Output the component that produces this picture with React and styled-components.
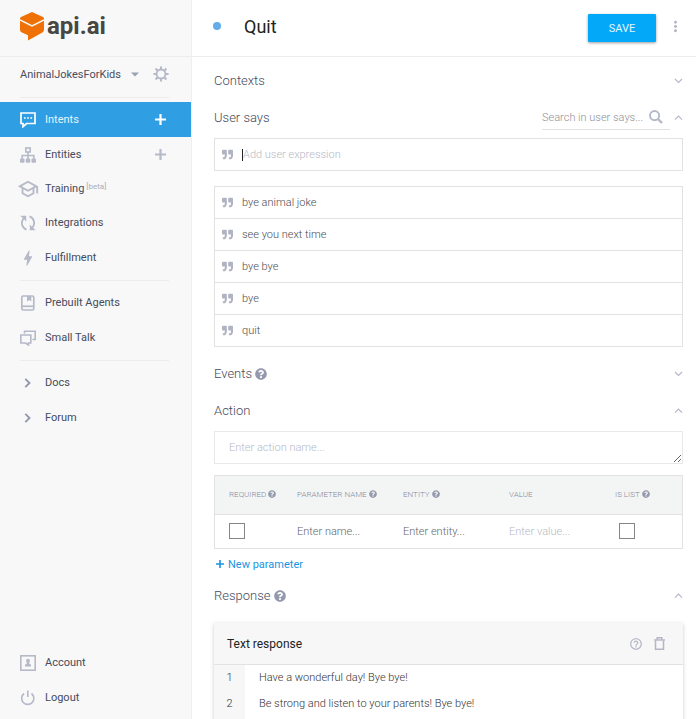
import styled, { createGlobalStyle } from "styled-components";
import { FaQuestionCircle, FaQuoteRight } from "react-icons/fa";
import { MdHelpOutline, MdOutlineSchool, MdBolt, MdMoreVert } from "react-icons/md";

const expressions = ["bye animal joke", "see you next time", "bye bye", "bye", "quit"];

const responses = [
  "Have a wonderful day! Bye bye!",
  "Be strong and listen to your parents! Bye bye!",
];

const LogoMark = () => (
  <svg width="24" height="29" viewBox="0 0 24 29" aria-hidden="true">
    <path
      fill="#ef7106"
      d="M12 0 L23 5 Q24 5.500 24 7 V17.500 Q24 19.500 22.400 20.400 L8 28.500 V23.300 L1.400 20.200 Q0 19.400 0 17.800 V7 Q0 5.500 1 5 Z"
    />
    <path d="M0 8 L12 14 L24 8" fill="none" stroke="#f8f8f8" strokeWidth="1.500" />
  </svg>
);

const GearIcon = () => (
  <svg width="16" height="16" viewBox="0 0 16 16" fill="none" stroke="#b5b9c8" aria-hidden="true">
    <circle cx="8" cy="8" r="4.500" strokeWidth="1.900" />
    <path
      strokeWidth="2.100"
      d="M8 .400V3M8 13v2.600M.400 8H3M13 8h2.600M2.600 2.600l1.900 1.900M11.500 11.500l1.900 1.900M13.400 2.600l-1.900 1.900M4.500 11.500l-1.900 1.900"
    />
  </svg>
);

const IntentsIcon = () => (
  <svg width="16" height="16" viewBox="0 0 16 16" fill="none" stroke="#fff" strokeWidth="1.700" aria-hidden="true">
    <path d="M1 1h14v10.500H6.500L3 14.700V11.500H1Z" />
    <path d="M4 6h1.700M7.200 6h1.700M10.400 6h1.700" strokeWidth="1.700" />
  </svg>
);

const EntitiesIcon = () => (
  <svg width="16" height="16" viewBox="0 0 16 16" fill="none" stroke="#b5b9c8" strokeWidth="1.600" aria-hidden="true">
    <rect x="5.800" y="1" width="4.400" height="4" />
    <path d="M8 5v7M2.200 12V8.500h11.600V12" />
    <g fill="#b5b9c8" stroke="none">
      <rect x="0" y="11.500" width="4.500" height="4.200" rx="1" />
      <rect x="5.750" y="11.500" width="4.500" height="4.200" rx="1" />
      <rect x="11.500" y="11.500" width="4.500" height="4.200" rx="1" />
    </g>
  </svg>
);

const IntegrationsIcon = () => (
  <svg width="16" height="16" viewBox="0 0 16 16" fill="none" stroke="#b5b9c8" strokeWidth="1.800" aria-hidden="true">
    <path d="M6.500 14.700C2.500 13.500 -.200 7.500 4 3.200" />
    <path d="M9.500 1.300C13.500 2.500 16.200 8.500 12 12.800" />
    <path d="M.300 .800H6.200V6.500L4.300 4.500Z" fill="#b5b9c8" stroke="none" />
    <path d="M15.700 15.200H9.800V9.500l1.900 2Z" fill="#b5b9c8" stroke="none" />
  </svg>
);

const BookIcon = () => (
  <svg width="16" height="16" viewBox="0 0 16 16" fill="none" stroke="#b5b9c8" strokeWidth="1.700" aria-hidden="true">
    <rect x="1.800" y="1" width="12" height="14" rx="1.500" />
    <path d="M2 11.300h11.500" />
    <path d="M7 1h4.300v5.500L9.200 5 7 6.500Z" fill="#b5b9c8" stroke="none" />
  </svg>
);

const TalkIcon = () => (
  <svg width="16" height="16" viewBox="0 0 16 16" fill="none" stroke="#b5b9c8" strokeWidth="1.600" aria-hidden="true">
    <path d="M.800 5H10.800v8H8.500v2L5.500 13H.800Z" />
    <path d="M4.500 3.500V1.200h10.700V9.500h-2.800" />
  </svg>
);

const AccountIcon = () => (
  <svg width="16" height="16" viewBox="0 0 16 16" fill="#b5b9c8" aria-hidden="true">
    <rect x=".800" y=".800" width="14.400" height="14.400" fill="none" stroke="#b5b9c8" strokeWidth="1.600" />
    <circle cx="8" cy="5.800" r="2" />
    <path d="M6.800 7h2.400v1.500L11 9.800V11.500H5V9.800l1.800-1.300Z" />
  </svg>
);

const PowerIcon = () => (
  <svg width="16" height="16" viewBox="0 0 16 16" fill="none" stroke="#b5b9c8" strokeWidth="1.600" aria-hidden="true">
    <path d="M4 3.500A6.100 6.100 0 1 0 11.500 3.500M7.800 .500V7" />
  </svg>
);

const TrashIcon = () => (
  <svg width="11" height="13" viewBox="0 0 11 13" fill="none" stroke="#b5b5c6" aria-hidden="true">
    <path d="M0 3h11" strokeWidth="1.400" />
    <path d="M3.200 3V.800h4.600V3M1.500 3.500V12.200h8V3.500" strokeWidth="1.500" />
  </svg>
);

const SearchIcon = () => (
  <svg width="14" height="14" viewBox="0 0 14 14" fill="none" stroke="#b5b9c8" aria-hidden="true">
    <circle cx="5.600" cy="5.600" r="4.600" strokeWidth="1.900" />
    <path d="M9 9l4 4" strokeWidth="2.400" />
  </svg>
);

const Arrow = ({ direction }) => (
  <svg width="9" height="6" viewBox="0 0 9 6" fill="none" stroke="#b5b9c8" strokeWidth="1.200" aria-hidden="true">
    <path d={direction === "up" ? "M1 4.700l3.500-3.500L8 4.700" : "M1 1l3.500 3.500L8 1"} />
  </svg>
);

const Caret = () => (
  <svg width="8" height="5" viewBox="0 0 8 5" fill="#9ba0b2" aria-hidden="true">
    <path d="M0 .500h8L4 4.500Z" />
  </svg>
);

const RightChevron = () => (
  <svg width="16" height="16" viewBox="0 0 16 16" fill="none" stroke="#9499ad" strokeWidth="1.900" aria-hidden="true">
    <path d="M5.300 3.800l4.200 4.200-4.200 4.200" />
  </svg>
);

const Plus = ({ size = 11 }) => (
  <svg width={size} height={size} viewBox="0 0 11 11" stroke="currentColor" strokeWidth="2.200" aria-hidden="true">
    <path d="M5.500 0v11M0 5.500h11" />
  </svg>
);

const NavLink = ({ icon, label, beta, active, addable, short }) => (
  <NavItem $active={active} $short={short}>
    <NavAnchor href="#">
      <NavIcon>{icon}</NavIcon>
      {label}
      {beta && <Beta>[beta]</Beta>}
    </NavAnchor>
    {addable && (
      <AddButton type="button" aria-label={`Create ${label}`} $active={active}>
        <Plus />
      </AddButton>
    )}
  </NavItem>
);

const Section = ({ title, help, open, children }) => (
  <SectionHead>
    <SectionTitle>
      {title}
      {help && <FaQuestionCircle size={12} />}
    </SectionTitle>
    {children}
    <IconButton type="button" aria-label={`Toggle ${title}`}>
      <Arrow direction={open ? "up" : "down"} />
    </IconButton>
  </SectionHead>
);

const App = () => {
  return (
    <>
      <GlobalStyle />
      <Page>
        <Sidebar>
          <Brand href="#">
            <LogoMark />
            api.ai
          </Brand>
          <AgentRow>
            <AgentButton type="button">
              AnimalJokesForKids
              <Caret />
            </AgentButton>
            <IconButton type="button" aria-label="Agent settings">
              <GearIcon />
            </IconButton>
          </AgentRow>
          <Nav>
            <NavLink icon={<IntentsIcon />} label="Intents" active addable />
            <NavLink icon={<EntitiesIcon />} label="Entities" addable />
            <NavLink icon={<MdOutlineSchool size={22} />} label="Training" beta short />
            <NavLink icon={<IntegrationsIcon />} label="Integrations" />
            <NavLink icon={<MdBolt size={20} />} label="Fulfillment" />
            <Divider />
            <NavLink icon={<BookIcon />} label="Prebuilt Agents" />
            <NavLink icon={<TalkIcon />} label="Small Talk" />
            <Divider />
            <NavLink icon={<RightChevron />} label="Docs" />
            <NavLink icon={<RightChevron />} label="Forum" />
          </Nav>
          <NavLink icon={<AccountIcon />} label="Account" />
          <NavLink icon={<PowerIcon />} label="Logout" />
        </Sidebar>

        <Main>
          <TopBar>
            <Dot />
            <IntentName>Quit</IntentName>
            <SaveButton type="button">SAVE</SaveButton>
            <IconButton type="button" aria-label="More">
              <MdMoreVert size={17} />
            </IconButton>
          </TopBar>

          <Content>
            <Section title="Contexts" />
            <Section title="User says" open>
              <Search>
                <SearchInput type="text" aria-label="Search in user says" placeholder="Search in user says..." />
                <SearchIcon />
              </Search>
            </Section>
            <ExpressionEntry>
              <FaQuoteRight size={11} />
              <EntryField>
                <Cursor />
                <PlainInput aria-label="Add user expression" placeholder="Add user expression" />
              </EntryField>
            </ExpressionEntry>
            <ExpressionList>
              {expressions.map((text) => (
                <Expression key={text}>
                  <FaQuoteRight size={11} />
                  {text}
                </Expression>
              ))}
            </ExpressionList>

            <Section title="Events" help />
            <Section title="Action" open />
            <ActionInput rows={1} aria-label="Action name" placeholder="Enter action name..." />
            <TableFrame>
              <Table>
                <colgroup>
                  <Col $width="68px" />
                  <Col />
                  <Col />
                  <Col />
                  <Col $width="81px" />
                </colgroup>
                <thead>
                  <tr>
                    <Th>REQUIRED <FaQuestionCircle size={8} /></Th>
                    <Th>PARAMETER NAME <FaQuestionCircle size={8} /></Th>
                    <Th>ENTITY <FaQuestionCircle size={8} /></Th>
                    <Th>VALUE</Th>
                    <Th>IS LIST <FaQuestionCircle size={8} /></Th>
                  </tr>
                </thead>
                <tbody>
                  <tr>
                    <Td><Checkbox type="checkbox" aria-label="Required" /></Td>
                    <Td><CellInput $dark aria-label="Parameter name" placeholder="Enter name..." /></Td>
                    <Td><CellInput $dark aria-label="Entity" placeholder="Enter entity..." /></Td>
                    <Td><CellInput aria-label="Value" placeholder="Enter value..." /></Td>
                    <Td $indent><Checkbox type="checkbox" aria-label="Is list" /></Td>
                  </tr>
                </tbody>
              </Table>
            </TableFrame>
            <NewParameter type="button">
              <Plus size={8} />
              New parameter
            </NewParameter>

            <Section title="Response" help open />
            <Card>
              <CardHead>
                <CardTitle>Text response</CardTitle>
                <IconButton type="button" aria-label="Help">
                  <MdHelpOutline size={14} />
                </IconButton>
                <IconButton type="button" aria-label="Delete response">
                  <TrashIcon />
                </IconButton>
              </CardHead>
              <ResponseList>
                {responses.map((text, i) => (
                  <Response key={text}>
                    <LineNumber>{i + 1}</LineNumber>
                    <ResponseText>{text}</ResponseText>
                  </Response>
                ))}
                <Response>
                  <LineNumber />
                </Response>
              </ResponseList>
            </Card>
          </Content>
        </Main>
      </Page>
    </>
  );
};

const GlobalStyle = createGlobalStyle`
  * {
    box-sizing: border-box;
  }

  body {
    margin: 0;
    font-family: Roboto, sans-serif;
    font-size: 11px;
    color: #4a4e5c;
    background: #fff;
  }

  button, input, textarea {
    font: inherit;
    color: inherit;
  }

  svg {
    flex-shrink: 0;
  }
`;

const Page = styled.div`
  display: grid;
  grid-template-columns: 192px 1fr;
  height: 100vh;
`;

const Sidebar = styled.aside`
  display: flex;
  flex-direction: column;
  padding-bottom: 4px;
  background: #f8f8f8;
  border-right: 1px solid #efefef;
`;

const Brand = styled.a`
  display: flex;
  align-items: center;
  gap: 3px;
  height: 57px;
  padding: 0 20px 4px;
  border-bottom: 1px solid #ececec;
  color: #474743;
  font-size: 24px;
  font-weight: 700;
  text-decoration: none;
`;

const AgentRow = styled.div`
  display: flex;
  align-items: center;
  justify-content: space-between;
  height: 41px;
  margin: 0 22px 4px 20px;
  padding-bottom: 6px;
  border-bottom: 1px solid #ececec;
`;

const AgentButton = styled.button`
  display: flex;
  align-items: center;
  gap: 10px;
  padding: 0;
  border: 0;
  background: none;
`;

const IconButton = styled.button`
  display: flex;
  align-items: center;
  padding: 0;
  border: 0;
  background: none;
  color: #b0b3c2;
`;

const Nav = styled.nav`
  flex: 1;
`;

const NavItem = styled.div`
  display: flex;
  align-items: center;
  justify-content: space-between;
  height: ${(props) => (props.$short ? "33px" : "35px")};
  padding: 0 25px 0 20px;
  background: ${(props) => (props.$active ? "#2f9ee3" : "transparent")};
  color: ${(props) => (props.$active ? "#e4f4ff" : "#454b5d")};
`;

const NavAnchor = styled.a`
  display: flex;
  align-items: center;
  color: inherit;
  text-decoration: none;
`;

const NavIcon = styled.span`
  display: flex;
  justify-content: center;
  width: 16px;
  margin-right: 9px;
  color: #b5b9c8;
`;

const Beta = styled.sup`
  margin-left: 2px;
  padding-bottom: 4px;
  color: #a9adbb;
  font-size: 8px;
  line-height: 8px;
`;

const AddButton = styled(IconButton)`
  color: ${(props) => (props.$active ? "#fff" : "#b5b9c8")};
`;

const Divider = styled.hr`
  margin: 5px 22px 4px 20px;
  border: 0;
  border-top: 1px solid #ececec;
`;

const Main = styled.main`
  display: flex;
  flex-direction: column;
  min-width: 0;
  min-height: 0;
`;

const TopBar = styled.header`
  display: flex;
  flex-shrink: 0;
  align-items: center;
  height: 57px;
  padding: 0 12px 4px 21px;
  border-bottom: 1px solid #ececec;
`;

const Dot = styled.span`
  width: 8px;
  height: 8px;
  border-radius: 50%;
  background: #62ace9;
`;

const IntentName = styled.h1`
  flex: 1;
  margin: 0 0 0 23px;
  color: #222;
  font-size: 18px;
  font-weight: 400;
`;

const SaveButton = styled.button`
  width: 68px;
  height: 28px;
  margin: 4px 11px 0 0;
  border: 0;
  border-radius: 1px;
  background: #03a9f8;
  box-shadow: 0 1px 3px rgba(0, 0, 0, 0.4);
  color: #e4f6ff;
`;

const Content = styled.div`
  flex: 1;
  min-height: 0;
  padding: 5px 13px 0 22px;
  overflow-y: auto;
  scrollbar-width: none;
`;

const SectionHead = styled.div`
  display: flex;
  align-items: center;
  height: 37px;
`;

const SectionTitle = styled.h2`
  display: flex;
  flex: 1;
  align-items: center;
  gap: 3px;
  margin: 0;
  color: #454b5d;
  font-size: 13px;
  font-weight: 300;

  svg {
    color: #9499ad;
  }
`;

const Search = styled.div`
  display: flex;
  align-items: center;
  width: 128px;
  height: 24px;
  margin-right: 4px;
  padding-right: 7px;
  border-bottom: 1px solid #e2e2e6;
`;

const PlainInput = styled.input`
  flex: 1;
  width: 100%;
  min-width: 0;
  padding: 0;
  border: 0;
  outline: 0;
  background: none;
  font-weight: 300;

  &::placeholder {
    color: #b5b9c8;
  }
`;

const SearchInput = styled(PlainInput)`
  &::placeholder {
    color: #8f8f94;
  }
`;

const ExpressionEntry = styled.div`
  display: flex;
  align-items: center;
  gap: 9px;
  height: 33px;
  margin: 2px 0 15px;
  padding-left: 7px;
  border: 1px solid #e2e2e2;
  color: #b0b3c2;
`;

const EntryField = styled.div`
  display: flex;
  flex: 1;
  align-items: center;
`;

const Cursor = styled.span`
  width: 1px;
  height: 12px;
  background: #222;
`;

const ExpressionList = styled.ul`
  margin: 0 0 8px;
  padding: 0;
  border: 1px solid #e2e2e2;
  border-top: 0;
  list-style: none;
`;

const Expression = styled.li`
  display: flex;
  align-items: center;
  gap: 9px;
  height: 32px;
  padding-left: 7px;
  border-top: 1px solid #e2e2e2;
  color: #4c4c4c;
  font-weight: 300;

  svg {
    color: #b0b3c2;
  }
`;

const ActionInput = styled.textarea`
  display: block;
  width: 100%;
  height: 33px;
  margin: 2px 0 11px;
  padding: 8px 14px;
  border: 1px solid #e8e8e8;
  outline: 0;
  font-weight: 300;
  line-height: 15px;
  overflow: hidden;

  &::placeholder {
    color: #b5b9c8;
  }
`;

const TableFrame = styled.div`
  border: 1px solid #e2e2e2;
`;

const Table = styled.table`
  width: 100%;
  border-collapse: collapse;
  table-layout: fixed;
`;

const Col = styled.col`
  width: ${(props) => props.$width || "auto"};
`;

const Th = styled.th`
  height: 38px;
  padding: 0 0 0 14px;
  border-bottom: 1px solid #e2e2e2;
  background: #f3f5f5;
  color: #85899c;
  font-size: 8px;
  font-weight: 300;
  text-align: left;
  white-space: nowrap;

  svg {
    color: #9499ad;
    vertical-align: -1px;
  }
`;

const Td = styled.td`
  height: 34px;
  padding: 0 0 0 ${(props) => (props.$indent ? "18px" : "14px")};
`;

const Checkbox = styled.input`
  display: block;
  width: 16px;
  height: 16px;
  margin: 0;
  appearance: none;
  border: 1px solid #858585;
  background: #fff;
`;

const CellInput = styled(PlainInput)`
  display: block;

  &::placeholder {
    color: ${(props) => (props.$dark ? "#666" : "#b5b9c8")};
  }
`;

const NewParameter = styled.button`
  display: flex;
  align-items: center;
  gap: 4px;
  height: 26px;
  margin-top: 2px;
  padding: 0 2px;
  border: 0;
  background: none;
  color: #1a94e0;
`;

const Card = styled.section`
  margin-top: 9px;
  box-shadow: 0 1px 4px rgba(0, 0, 0, 0.2);
`;

const CardHead = styled.div`
  display: flex;
  align-items: center;
  gap: 11px;
  height: 42px;
  padding: 0 18px 0 13px;
  border-bottom: 1px solid #e2e2e2;
  background: #f7f7f7;
`;

const CardTitle = styled.h3`
  flex: 1;
  margin: 0;
  color: #222;
  font-size: 12px;
  font-weight: 400;
`;

const ResponseList = styled.ol`
  margin: 0;
  padding: 0;
  list-style: none;
`;

const Response = styled.li`
  display: flex;
  height: 26px;
  color: #333;
  font-weight: 300;
  line-height: 26px;
`;

const LineNumber = styled.span`
  width: 31px;
  background: #f7f7f7;
  text-align: center;
`;

const ResponseText = styled.span`
  margin-left: 14px;
`;

export default App;
